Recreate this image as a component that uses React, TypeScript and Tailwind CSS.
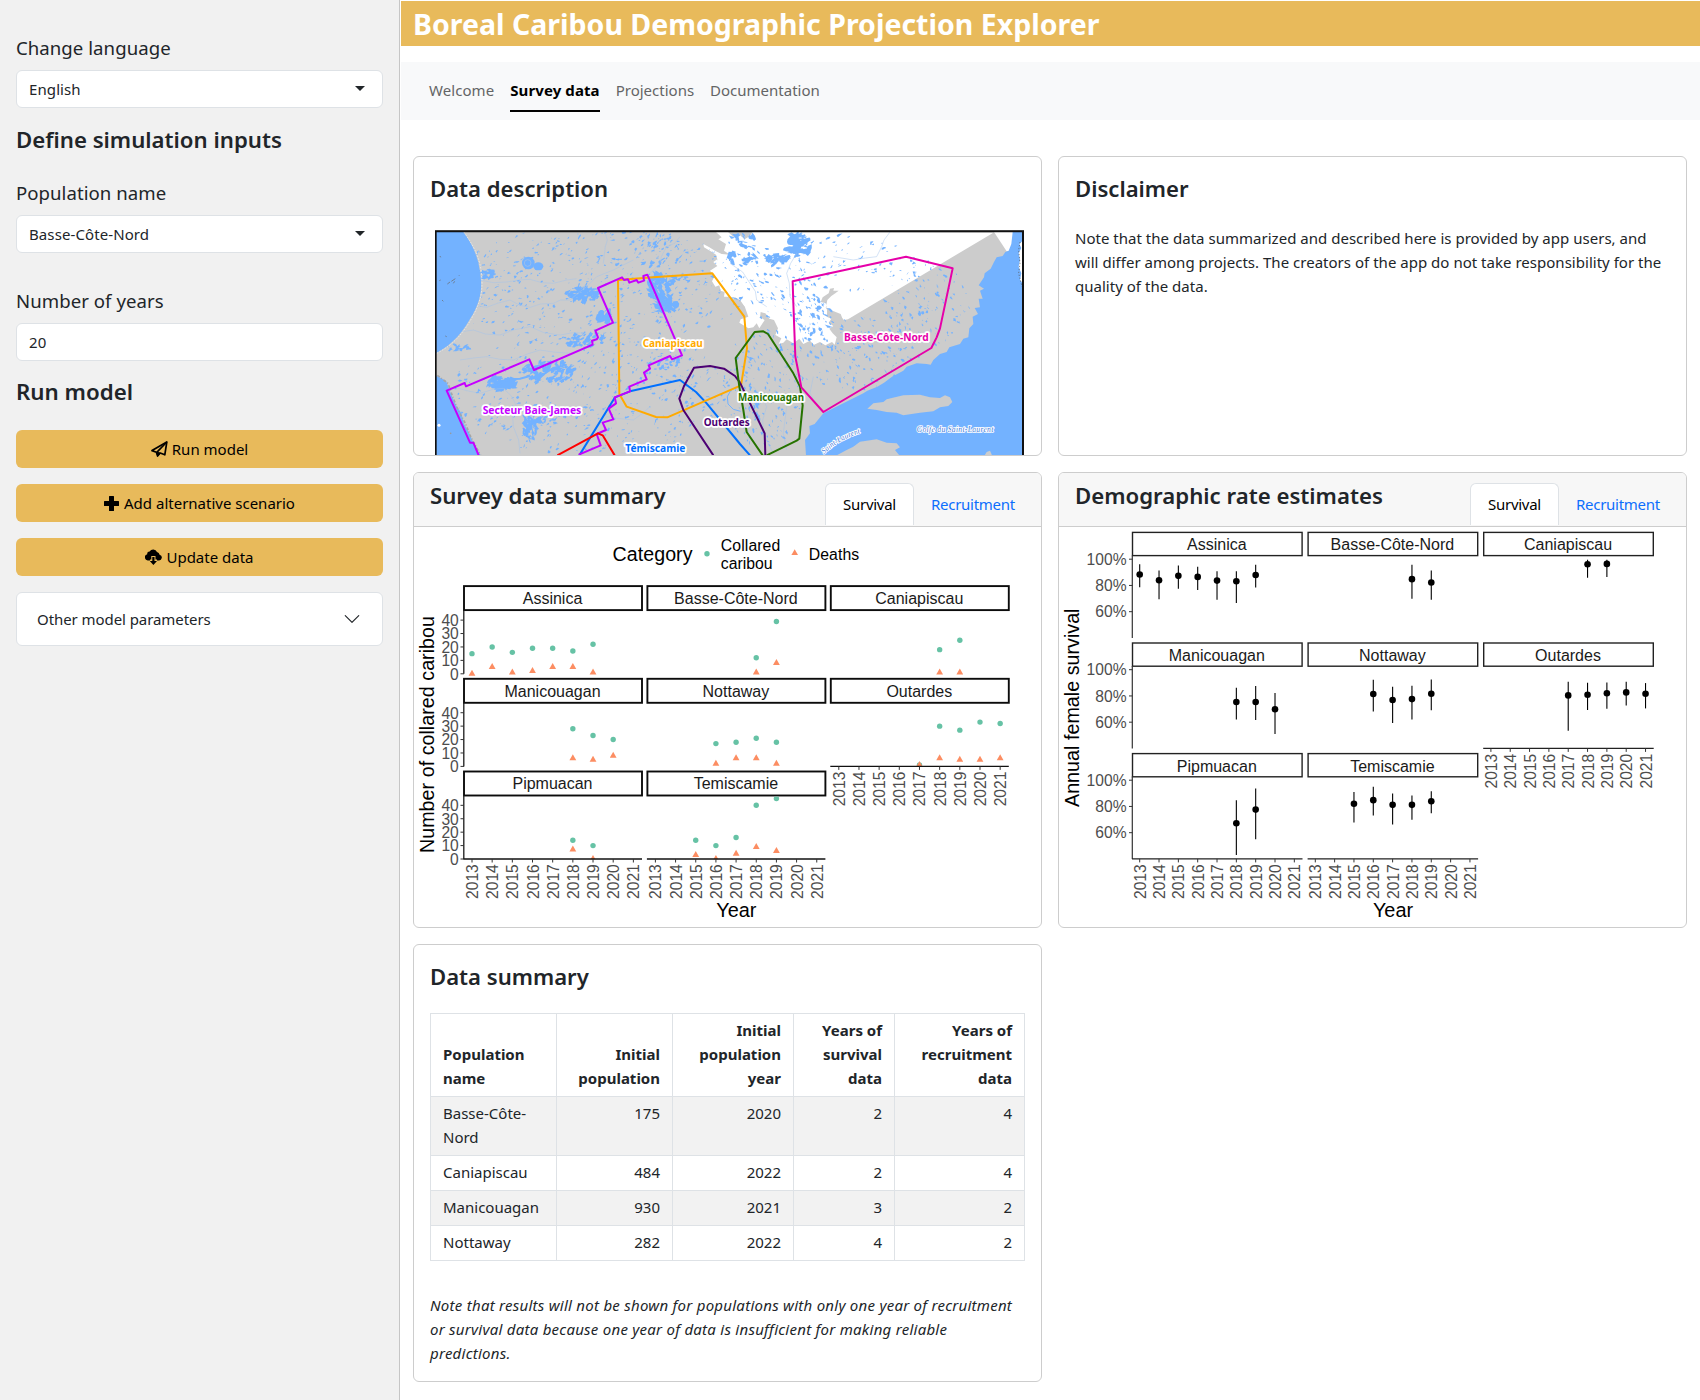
import React from "react";
import { BsChevronDown } from "react-icons/bs";

/* ---------- Icons ---------- */

const SendIcon = () => (
  <svg width="17" height="16" viewBox="0 0 17 16" fill="none" stroke="black" strokeWidth="1.7" strokeLinejoin="round">
    <path d="M1 9.6 15.8 1 13.8 13.8 9.2 12 6.6 15 5.4 11.2Z" />
    <path d="M15.8 1 6 11.2" />
    <path d="M5.6 11.2 9.2 12 6.6 15Z" fill="black" strokeWidth="1" />
  </svg>
);

const PlusIcon = () => (
  <svg width="15" height="15" viewBox="0 0 15 15">
    <path d="M5 .6Q5 0 5.6 0H9.4Q10 0 10 .6V5H14.4Q15 5 15 5.6V9.4Q15 10 14.4 10H10V14.4Q10 15 9.4 15H5.6Q5 15 5 14.4V10H.6Q0 10 0 9.4V5.6Q0 5 .6 5H5Z" />
  </svg>
);

const CloudIcon = () => (
  <svg width="17" height="16" viewBox="0 0 17 16">
    <path d="M5 11.4H3.2A3.1 3.1 0 0 1 2.2 5.3 2.4 2.4 0 0 1 4.6 2.6 4.1 4.1 0 0 1 12 2.9 3.6 3.6 0 0 1 14.6 5.7 2.9 2.9 0 0 1 13.6 11.4H12V10.6H10.5V7H6.3V10.6H5Z" />
    <path d="M7.3 8H9.5V12H12L8.4 16 4.8 12H7.3Z" />
  </svg>
);

/* ---------- Sidebar ---------- */

const Label = ({ children, className = "" }: { children: React.ReactNode; className?: string }) => (
  <div className={"mb-2 h-7 text-[18.6px] leading-7 tracking-[0.05px] " + className}>{children}</div>
);

const Field = ({ value, caret = false }: { value: string; caret?: boolean }) => (
  <div className="flex h-[38px] items-center justify-between rounded-md border border-[#dee2e6] bg-white pl-3 pr-[17px] text-[15px] leading-6 tracking-[0.1px]">
    <span>{value}</span>
    {caret && (
      <svg width="10" height="5" viewBox="0 0 10 5" className="-mt-0.5">
        <path d="M0 0H10L5 5Z" fill="#212529" />
      </svg>
    )}
  </div>
);

const Button = ({ icon, label, gap }: { icon: React.ReactNode; label: string; gap: string }) => (
  <button className={"flex h-[38px] w-full items-center justify-center rounded-md bg-[#e8ba5b] text-[15px] leading-6 text-black " + gap}>
    {icon}
    <span>{label}</span>
  </button>
);

const Sidebar = () => (
  <aside className="h-[1400px] w-[400px] shrink-0 border-r border-[#c6c6c6] bg-[#f1f1f1] pl-4 pr-4 pt-[34px]">
    <Label>Change language</Label>
    <Field value="English" caret />
    <h3 className="mt-[18px] h-7 text-[22.2px] font-semibold leading-7">Define simulation inputs</h3>
    <Label className="mt-[25px]">Population name</Label>
    <Field value="Basse-Côte-Nord" caret />
    <Label className="mt-[34px]">Number of years</Label>
    <Field value="20" />
    <h3 className="mt-[17px] h-7 text-[22.3px] font-semibold leading-7">Run model</h3>
    <div className="mt-6 flex flex-col gap-4">
      <Button icon={<SendIcon />} label="Run model" gap="gap-1" />
      <Button icon={<PlusIcon />} label="Add alternative scenario" gap="gap-[5px]" />
      <Button icon={<CloudIcon />} label="Update data" gap="gap-1" />
      <div className="flex h-[54px] items-center justify-between rounded-md border border-[#dee2e6] bg-white pl-5 pr-[21px] text-[15px] tracking-[-0.07px]">
        <span>Other model parameters</span>
        <BsChevronDown size={18} />
      </div>
    </div>
  </aside>
);

/* ---------- Map ---------- */

type Cluster = { x: number; y: number; rx: number; ry: number; n: number; s: number; a: number };

const clusters: Cluster[] = [
  { x: 520, y: 200, rx: 470, ry: 180, n: 520, s: 3.4, a: -0.5 },
  { x: 520, y: 520, rx: 430, ry: 190, n: 420, s: 3.4, a: -0.6 },
  { x: 330, y: 130, rx: 50, ry: 20, n: 8, s: 4, a: 0 },
  { x: 205, y: 165, rx: 20, ry: 14, n: 20, s: 7, a: 0.2 },
  { x: 110, y: 384, rx: 36, ry: 8, n: 12, s: 6, a: 0 },
  { x: 490, y: 222, rx: 52, ry: 22, n: 70, s: 6.5, a: -0.7 },
  { x: 715, y: 200, rx: 34, ry: 40, n: 70, s: 7, a: 0.9 },
  { x: 735, y: 255, rx: 34, ry: 26, n: 50, s: 8, a: 0.3 },
  { x: 750, y: 180, rx: 60, ry: 16, n: 40, s: 6, a: 0 },
  { x: 555, y: 292, rx: 20, ry: 18, n: 26, s: 8, a: -1 },
  { x: 500, y: 360, rx: 60, ry: 22, n: 50, s: 6, a: -0.5 },
  { x: 385, y: 455, rx: 80, ry: 34, n: 90, s: 7, a: -0.5 },
  { x: 245, y: 490, rx: 40, ry: 20, n: 70, s: 8, a: -0.3 },
  { x: 330, y: 620, rx: 20, ry: 42, n: 50, s: 6.5, a: 1.2 },
  { x: 380, y: 605, rx: 36, ry: 16, n: 24, s: 5, a: -0.2 },
  { x: 730, y: 430, rx: 50, ry: 20, n: 30, s: 5, a: -0.5 },
  { x: 710, y: 90, rx: 90, ry: 50, n: 60, s: 4.5, a: -0.6 },
  { x: 960, y: 85, rx: 50, ry: 50, n: 34, s: 7, a: 0.8 },
  { x: 1135, y: 75, rx: 34, ry: 32, n: 55, s: 9, a: -0.4 },
  { x: 1070, y: 118, rx: 34, ry: 14, n: 36, s: 8, a: -0.4 },
  { x: 1060, y: 190, rx: 130, ry: 110, n: 100, s: 4.2, a: 0.6 },
  { x: 1180, y: 290, rx: 55, ry: 60, n: 60, s: 5, a: 1 },
  { x: 1300, y: 130, rx: 200, ry: 90, n: 70, s: 3.5, a: -0.5 },
  { x: 1300, y: 400, rx: 200, ry: 110, n: 170, s: 3.5, a: 0.9 },
  { x: 1520, y: 250, rx: 130, ry: 130, n: 130, s: 3.5, a: 0.9 },
  { x: 1030, y: 500, rx: 120, ry: 180, n: 180, s: 3.6, a: 1.1 },
  { x: 1010, y: 560, rx: 12, ry: 50, n: 20, s: 5, a: 1.3 },
];

/** Small irregular lakes scattered inside the clusters, as one path. */
function lakesPath(): string {
  let seed = 1234567;
  const rnd = () => {
    seed = (seed * 1664525 + 1013904223) % 4294967296;
    return seed / 4294967296;
  };
  let d = "";
  for (const c of clusters) {
    for (let i = 0; i < c.n; i++) {
      const t = rnd() * Math.PI * 2;
      const q = Math.sqrt(rnd());
      const cx = c.x + Math.cos(t) * c.rx * q;
      const cy = c.y + Math.sin(t) * c.ry * q;
      const len = c.s * (0.5 + rnd() * 1.4);
      const wid = len * (0.25 + rnd() * 0.5);
      const a = c.a + (rnd() - 0.5) * 1.3;
      for (let k = 0; k < 8; k++) {
        const p = (k / 8) * Math.PI * 2;
        const r = 0.4 + rnd();
        const u = Math.cos(p) * len * r;
        const v = Math.sin(p) * wid * r;
        const x = cx + u * Math.cos(a) - v * Math.sin(a);
        const y = cy + u * Math.sin(a) + v * Math.cos(a);
        d += (k ? "L" : "M") + x.toFixed(1) + " " + y.toFixed(1);
      }
      d += "Z";
    }
  }
  return d;
}

const lakes = lakesPath();

const MapName = ({ x, y, w, color, children }: { x: number; y: number; w: number; color: string; children: string }) => (
  <text
    x={x}
    y={y}
    textLength={w}
    lengthAdjust="spacingAndGlyphs"
    fill={color}
    stroke="white"
    strokeWidth="11"
    strokeLinejoin="round"
    paintOrder="stroke"
    className="font-['Noto_Sans'] text-[31.5px] font-bold"
  >
    {children}
  </text>
);

const RangeMap = () => (
  <svg width="589" height="226" viewBox="45 30 1767 678" className="block shrink-0">
    <rect x="45" y="30" width="1767" height="810" fill="#cccccc" />
    {/* White area outside the province */}
    <path
      fill="white"
      d="M888 36 905 52 895 58 918 72 912 92 930 104 905 102 885 92 868 82 850 72 852 82 872 94 888 104 892 118 880 126 892 138 870 152 884 168 876 184 886 200 898 196 902 212 914 216 912 230 926 230 934 242 944 232 960 240 975 262 985 290 962 298 958 308 985 325 1000 322 1010 310 1018 325 1034 300 1020 292 1022 276 1036 280 1048 296 1062 300 1074 325 1066 345 1084 355 1076 372 1090 368 1100 358 1120 370 1138 356 1150 372 1170 362 1182 374 1200 366 1216 376 1236 366 1244 374 1250 352 1238 340 1228 326 1240 318 1226 308 1234 296 1220 290 1222 270 1216 262 1262 290 1272 300 1284 298 1720 38Z"
    />
    <path fill="#cccccc" d="M1222 276 1218 250 1202 246 1208 232 1226 220 1230 206 1242 204 1240 212 1256 212 1246 220 1234 228 1222 240 1218 262 1232 270 1262 282 1270 302 1240 300Z" />
    <path fill="#cccccc" d="M930 238 960 244 975 262 975 290 960 296 940 275Z" />
    <path fill="#cccccc" d="M924 36H998L990 48 974 58 960 46 940 50Z" />
    <path fill="white" d="M1722 36H1780L1778 70 1772 92 1760 94Z" />
    {/* Lakes and rivers */}
    <path d={lakes} fill="#73b2ff" />
    <g fill="none" stroke="#a3c3ec" strokeWidth="1.4">
      <path d="M120 240 150 246 162 256 200 262 232 250 270 240 300 256 330 262 362 252 400 250 422 240 450 240 478 216 500 200 530 170 580 150 640 120" />
      <path d="M90 340 120 336 160 330 196 342 240 345 280 330 330 320 372 338 420 345 460 338 500 340" />
      <path d="M180 180 220 188 260 186 296 180 330 178 366 188 400 190 440 180 470 176" />
      <path d="M555 36 562 60 556 80 550 130" />
      <path d="M780 50 764 70 740 80 724 110 720 130 690 160" />
      <path d="M120 420 160 414 200 410 240 418 280 420 322 402 360 390 400 396 450 400" />
      <path d="M100 500 140 512 180 520 220 508 250 505 276 530 290 560 278 590 280 620 296 660 300 700" />
      <path d="M520 640 540 612 560 590 600 596 640 600 668 580 690 560" />
      <path d="M930 130 968 156 990 190 1006 214 1010 240 1040 260" />
      <path d="M1130 100 1112 130 1100 160 1108 190 1110 230 1130 260" />
      <path d="M1410 36 1392 60 1385 80 1370 110 1336 114 1300 120 1240 110" />
      <path d="M1000 500 1024 530 1040 560 1028 600 1030 640 1060 700M1100 560 1090 640 1100 690M1180 470 1170 520 1200 570" />
    </g>
    <g fill="none" stroke="#73b2ff" strokeWidth="3">
      <path d="M960 500 934 508 922 530 924 552 940 568 962 574" />
      <path d="M225 500 250 484 270 478 300 476 330 468M350 482 372 462 400 444 440 435" strokeWidth="6" />
      <path d="M690 180 704 200 715 225 736 244 760 270" strokeWidth="7" />
    </g>
    <circle cx="325" cy="129" r="19" fill="#73b2ff" />
    <circle cx="323" cy="129" r="10" fill="none" stroke="#a9c3e6" strokeWidth="2" />
    <ellipse cx="355" cy="139" rx="15" ry="12" fill="#73b2ff" />
    {/* Sea */}
    <path fill="#73b2ff" d="M46 36H130C152 66 172 100 179 150 188 200 184 235 160 280 130 335 100 372 48 400Z" />
    <path fill="none" stroke="#e4e4e4" strokeWidth="3" strokeDasharray="5 4" d="M132 36C152 66 176 100 183 150 190 200 186 235 162 282 134 335 102 374 50 400" />
    <path fill="#73b2ff" d="M46 466 78 482 92 520 108 556 124 580 132 612 148 640 160 668 172 690 186 712 190 840H46Z" />
    <path fill="none" stroke="#a6a6a6" strokeWidth="5" strokeDasharray="9 5 3 6" d="M52 466 84 490 98 530 114 570 136 610 152 650 170 684 182 706" />
    <g fill="none" stroke="#6d7f96" strokeWidth="3">
      <path d="M82 192 90 186M94 184 106 176M100 190 104 184M58 182 62 180M116 168 118 166M66 240 70 244M76 348 80 350M60 108 62 112" />
    </g>
    <circle cx="57" cy="616" r="4.5" fill="white" />
    <circle cx="92" cy="640" r="2.5" fill="#999" />
    <path
      fill="#73b2ff"
      d="M1778 36H1808V840H1150L1158 706 1155 660 1170 640 1168 618 1184 612 1210 580 1258 556 1330 520 1342 512 1372 500 1392 488 1416 470 1450 452 1460 440 1490 430 1520 432 1532 434 1540 420 1560 402 1580 396 1588 382 1620 372 1630 356 1645 352 1648 325 1660 312 1658 290 1674 282 1664 264 1680 262 1676 236 1688 236 1680 212 1692 206 1676 196 1692 172 1694 160 1712 146 1722 126 1730 112 1748 108 1756 96 1766 92 1774 72Z"
    />
    <path fill="white" d="M1808 62 1798 72 1804 84 1796 100 1800 120 1796 140 1804 160 1800 180 1808 190Z" />
    <path fill="none" stroke="#555" strokeWidth="2" strokeDasharray="4 5" d="M1800 66 1796 90 1800 130 1796 160 1806 200" />
    <path fill="#cccccc" d="M1342 566 1360 550 1390 546 1400 538 1450 526 1500 524 1530 532 1560 534 1575 526 1590 532 1597 546 1585 558 1560 562 1540 574 1500 578 1450 586 1430 578 1400 576 1370 570Z" />
    <path fill="#cccccc" d="M1250 706 1280 690 1300 680 1320 665 1370 658 1400 668 1430 670 1440 682 1425 690 1438 706V840H1250Z" />
    <path fill="#cccccc" d="M1694 706 1700 696 1710 692 1716 706Z" />
    {/* Range boundaries */}
    <g fill="none" strokeWidth="6" strokeLinejoin="round">
      <path stroke="#0070ff" d="M478 706 585 532 630 514 780 480 828 516 860 550 960 672 990 706" />
      <path stroke="#ffaa00" d="M594 180 700 172 877 160 973 290 981 385 963 496 742 592 708 591 620 560 598 522Z" />
      <path stroke="#c500ff" d="M176 706 160 668 150 668 80 512 134 489 138 499 328 418 342 450 518 374 516 362 530 358 534 352 526 332 579 308 534 204 606 172 612 180 624 178 628 188 650 180 655 188 672 182 670 168 682 164 786 406 756 418 750 408 686 436 690 446 672 458 680 478 628 500 630 514 584 532 588 550 566 566 580 598 548 608 558 630 530 642 542 676 476 704" />
      <path stroke="#4c0073" d="M960 488 945 468 912 446 870 438 822 443 792 498 778 536 790 570 880 706M960 488 1034 640 1036 706" />
      <path stroke="#267300" d="M1028 706 980 636 970 570 958 500 947 414 1004 336 1030 334 1044 342 1120 460 1140 500 1148 556 1138 656 1130 662 1040 706" />
      <path stroke="#e600a9" d="M1118 184 1458 110 1598 145 1560 325 1550 352 1534 384 1210 576 1144 502 1134 450 1126 410 1120 250Z" />
      <path stroke="red" d="M412 706 534 640 548 646 584 706" />
    </g>
    <MapName x={668} y={380} w={180} color="#ffaa00">Caniapiscau</MapName>
    <MapName x={188} y={581} w={296} color="#c500ff">Secteur Baie-James</MapName>
    <MapName x={616} y={695} w={180} color="#0070ff">Témiscamie</MapName>
    <MapName x={851} y={619} w={138} color="#4c0073">Outardes</MapName>
    <MapName x={954} y={543} w={198} color="#267300">Manicouagan</MapName>
    <MapName x={1272} y={364} w={254} color="#e600a9">Basse-Côte-Nord</MapName>
    <g className="font-['Liberation_Serif'] text-[23px] italic" fill="#3f78d8" stroke="white" strokeWidth="5" paintOrder="stroke">
      <text x="1490" y="636" textLength="230">Golfe du Saint-Laurent</text>
      <path id="river" d="M1212 702Q1262 652 1352 630" fill="none" stroke="none" />
      <text>
        <textPath href="#river">Saint-Laurent</textPath>
      </text>
    </g>
    <path d="M47 840V34H1809V840" fill="none" stroke="#111" strokeWidth="6" />
  </svg>
);

/* ---------- Charts ---------- */

const YEARS = [2013, 2014, 2015, 2016, 2017, 2018, 2019, 2020, 2021];

type CountPoint = [year: number, collared: number, deaths: number];

const counts: { name: string; pts: CountPoint[] }[] = [
  { name: "Assinica", pts: [[2013, 15, 0], [2014, 20, 5], [2015, 16, 1], [2016, 19, 2], [2017, 19, 5], [2018, 17, 5], [2019, 22, 1]] },
  { name: "Basse-Côte-Nord", pts: [[2018, 12, 1], [2019, 39, 8]] },
  { name: "Caniapiscau", pts: [[2018, 18, 1], [2019, 25, 1]] },
  { name: "Manicouagan", pts: [[2018, 28, 6], [2019, 23, 5], [2020, 20, 8]] },
  { name: "Nottaway", pts: [[2016, 17, 2], [2017, 18, 6], [2018, 21, 6], [2019, 18, 2]] },
  { name: "Outardes", pts: [[2017, 1, 1], [2018, 30, 6], [2019, 27, 5], [2020, 33, 5], [2021, 32, 6]] },
  { name: "Pipmuacan", pts: [[2018, 14, 7], [2019, 10, 0]] },
  { name: "Temiscamie", pts: [[2015, 14, 3], [2016, 10, 0], [2017, 16, 4], [2018, 40, 9], [2019, 45, 6]] },
];

const YearTicks = ({ x0, step, y, labelY }: { x0: number; step: number; y: number; labelY: number }) => (
  <>
    {YEARS.map((year, i) => (
      <g key={year}>
        <path d={`M${x0 + i * step} ${y}v3.5`} stroke="#333" strokeWidth="1" />
        <text transform={`translate(${x0 + i * step + 6} ${labelY}) rotate(-90)`} textAnchor="end" fill="#4d4d4d" className="text-[15.6px]">
          {year}
        </text>
      </g>
    ))}
  </>
);

const SurvivalCounts = () => (
  <svg width="627" height="400" viewBox="414 527.5 627 400" className="block font-['Liberation_Sans']">
    <defs>
      <clipPath id="plot-rows">
        <path d="M414 611H1041V677H414ZM414 704H1041V767H414ZM414 797H1041V860H414Z" />
      </clipPath>
    </defs>
    <text x="612.5" y="561.5" textLength="80" className="text-[19.6px]">Category</text>
    <circle cx="707" cy="554.3" r="2.7" fill="#66c2a5" />
    <text x="720.8" y="551.6" textLength="59.5" className="text-[15.8px]">Collared</text>
    <text x="720.8" y="569" className="text-[15.8px]">caribou</text>
    <path d="M794.7 549.8l3.3 5.8h-6.6z" fill="#fc8d62" />
    <text x="808.7" y="560.5" textLength="50.5" className="text-[15.8px]">Deaths</text>
    <text transform="translate(434 853.5) rotate(-90)" textLength="237" className="text-[19.7px]">Number of collared caribou</text>
    <text x="736.4" y="917.5" textAnchor="middle" className="text-[19.9px]">Year</text>
    {counts.map(({ name, pts }, i) => {
      const col = i % 3;
      const row = Math.floor(i / 3);
      const x = 464 + col * 183.4;
      const x0 = 472 + col * 183.4;
      const top = 586.6 + row * 92.7;
      const zero = 674.3 + row * 92.6;
      const sy = (v: number) => zero - v * 1.342;
      return (
        <g key={name}>
          <rect x={x} y={top} width="178" height="24" fill="white" stroke="#0c0c0c" strokeWidth="1.9" />
          <text x={x + 88.5} y={top + 17.9} textAnchor="middle" fill="#1a1a1a" className="text-[16px]">{name}</text>
          {col === 0 && (
            <>
              <path d={`M${x - 0.2} ${top + 24}V${zero}`} stroke="#1a1a1a" strokeWidth="1.3" />
              {[0, 10, 20, 30, 40].map((v) => (
                <g key={v}>
                  <path d={`M${x - 3.5} ${sy(v)}h3.5`} stroke="#333" strokeWidth="1" />
                  <text x="458.8" y={sy(v) + 5.9} textAnchor="end" fill="#4d4d4d" className="text-[15.6px]">{v}</text>
                </g>
              ))}
            </>
          )}
          <g clipPath="url(#plot-rows)">
            {pts.map(([year, a, b]) => {
              const px = x0 + (year - 2013) * 20.17;
              return (
                <g key={year}>
                  <circle cx={px} cy={sy(a)} r="2.7" fill="#66c2a5" />
                  <path d={`M${px} ${sy(b) - 4}l3.4 6h-6.8z`} fill="#fc8d62" />
                </g>
              );
            })}
          </g>
          {i >= 5 && (
            <>
              <path d={`M${x - 0.5} ${zero}h178.5`} stroke="#111" strokeWidth="1.3" />
              <YearTicks x0={x0} step={20.17} y={zero} labelY={zero + 5.2} />
            </>
          )}
        </g>
      );
    })}
  </svg>
);

type RatePoint = [year: number, mean: number, high: number, low: number];

const rates: { name: string; pts: RatePoint[] }[] = [
  { name: "Assinica", pts: [[2013, 88.3, 96.2, 78.7], [2014, 84, 91.4, 69.5], [2015, 87.3, 95.2, 77.4], [2016, 86.5, 94.2, 76.6], [2017, 83.7, 90.9, 69], [2018, 83.2, 90.9, 66.7], [2019, 88, 95.7, 78.4]] },
  { name: "Basse-Côte-Nord", pts: [[2018, 84.8, 95.7, 69.8], [2019, 82.2, 91.4, 69]] },
  { name: "Caniapiscau", pts: [[2018, 96.2, 99.5, 85.8], [2019, 96.4, 99.5, 86.5]] },
  { name: "Manicouagan", pts: [[2018, 75.4, 86.3, 62.1], [2019, 75.4, 87.6, 61.6], [2020, 69.8, 82.2, 51]] },
  { name: "Nottaway", pts: [[2016, 81.5, 92.4, 68.2], [2017, 76.9, 87, 59.3], [2018, 77.6, 87.8, 62.1], [2019, 81.7, 92.6, 69]] },
  { name: "Outardes", pts: [[2017, 80.4, 90.9, 53.5], [2018, 80.9, 90, 69.3], [2019, 82, 90.3, 70.3], [2020, 82.7, 90.9, 72.8], [2021, 81.7, 89.8, 70.5]] },
  { name: "Pipmuacan", pts: [[2018, 67.2, 84.8, 43], [2019, 77.6, 93.6, 55]] },
  { name: "Temiscamie", pts: [[2015, 82, 91, 67.7], [2016, 84.8, 95, 73], [2017, 81.2, 89.8, 66.2], [2018, 81.2, 88.3, 69.8], [2019, 84, 91.6, 74.8]] },
];

const SurvivalRates = () => (
  <svg width="627" height="400" viewBox="1059 527.5 627 400" className="block font-['Liberation_Sans']">
    <text transform="translate(1079 807.5) rotate(-90)" textLength="198.5" className="text-[19.7px]">Annual female survival</text>
    <text x="1393" y="917.5" textAnchor="middle" className="text-[19.9px]">Year</text>
    {rates.map(({ name, pts }, i) => {
      const col = i % 3;
      const row = Math.floor(i / 3);
      const x = 1132.5 + col * 175.6;
      const x0 = 1139.7 + col * 175.6;
      const top = 532.9 + row * 110.6;
      const full = 559.7 + row * 110.5;
      const sy = (v: number) => full + (100 - v) * 1.312;
      const base = full + 78.7;
      return (
        <g key={name}>
          <rect x={x} y={top} width="169.6" height="23.2" fill="white" stroke="#222" strokeWidth="1.4" />
          <text x={x + 84.3} y={top + 18} textAnchor="middle" fill="#1a1a1a" className="text-[16px]">{name}</text>
          {col === 0 && (
            <>
              <path d={`M${x - 0.2} ${top + 23}V${base}`} stroke="#333" strokeWidth="1.2" />
              {[60, 80, 100].map((v) => (
                <g key={v}>
                  <path d={`M${x - 3.5} ${sy(v)}h3.5`} stroke="#333" strokeWidth="1" />
                  <text x="1126.5" y={sy(v) + 5.6} textAnchor="end" fill="#4d4d4d" className="text-[15.6px]">{`${v}%`}</text>
                </g>
              ))}
            </>
          )}
          {pts.map(([year, mean, high, low]) => {
            const px = x0 + (year - 2013) * 19.33;
            return (
              <g key={year}>
                <path d={`M${px} ${sy(high)}V${sy(low)}`} stroke="black" strokeWidth="1.1" />
                <circle cx={px} cy={sy(mean)} r="3.3" />
              </g>
            );
          })}
          {i >= 5 && (
            <>
              <path d={`M${x - 0.5} ${base}h170.5`} stroke="#222" strokeWidth="1.2" />
              <YearTicks x0={x0} step={19.33} y={base} labelY={base + 5.4} />
            </>
          )}
        </g>
      );
    })}
  </svg>
);

/* ---------- Main area ---------- */

const Card = ({ children, className }: { children: React.ReactNode; className: string }) => (
  <section className={"overflow-hidden rounded-md border border-[#cdcdcd] bg-white " + className}>{children}</section>
);

const TabbedCard = ({ title, children }: { title: string; children: React.ReactNode }) => (
  <Card className="h-[456px]">
    <div className="flex h-[54px] justify-between border-b border-[#cdcdcd] bg-[#f7f7f7] pl-4 pr-2">
      <h3 className="mt-[9px] h-7 text-[22.2px] font-semibold leading-7">{title}</h3>
      <div className="mt-[10px] flex h-[42px] text-[15px] leading-[40px] tracking-[-0.27px]">
        <div className="w-[89px] rounded-t-md border border-b-0 border-[#dee2e6] bg-white text-center text-black">Survival</div>
        <div className="w-[119px] pl-[17px] pt-px text-[#0d6efd]">Recruitment</div>
      </div>
    </div>
    {children}
  </Card>
);

const rows = [
  ["Basse-Côte-Nord", "175", "2020", "2", "4"],
  ["Caniapiscau", "484", "2022", "2", "4"],
  ["Manicouagan", "930", "2021", "3", "2"],
  ["Nottaway", "282", "2022", "4", "2"],
];

const SummaryTable = () => (
  <table className="mt-[23px] w-[594px] table-fixed border-collapse text-[15px] leading-6">
    <colgroup>
      <col className="w-[126px]" />
      <col className="w-[116px]" />
      <col className="w-[121px]" />
      <col className="w-[101px]" />
      <col className="w-[130px]" />
    </colgroup>
    <thead>
      <tr>
        {["Population name", "Initial population", "Initial population year", "Years of survival data", "Years of recruitment data"].map((h, i) => (
          <th key={h} className={"border border-[#dee2e6] pb-[6px] pl-3 pr-3 pt-1 align-bottom font-bold " + (i ? "text-right" : "text-left")}>
            {h}
          </th>
        ))}
      </tr>
    </thead>
    <tbody>
      {rows.map((r, k) => (
        <tr key={r[0]} className={k % 2 ? "bg-white" : "bg-[#f2f2f2]"}>
          {r.map((v, i) => (
            <td key={i} className={"border border-[#dee2e6] pb-[6px] pl-3 pr-3 pt-1 align-top " + (i ? "text-right" : "text-left")}>
              {v}
            </td>
          ))}
        </tr>
      ))}
    </tbody>
  </table>
);

export default function App() {
  return (
    <div className="flex h-[1400px] w-[1700px] overflow-hidden bg-white font-['Noto_Sans',sans-serif] text-[#212529]">
      <Sidebar />
      <main className="ml-px flex-1">
        <header className="mt-px h-[45px] bg-[#e8ba5b] pl-3">
          <h1 className="whitespace-nowrap text-[28.5px] font-bold leading-[47px] text-white">Boreal Caribou Demographic Projection Explorer</h1>
        </header>
        <nav className="mt-4 flex h-[58px] gap-4 bg-[#f8f9fa] pl-7 pt-4 text-[15px] leading-6 text-[#646566]">
          <span className="tracking-[0.07px]">Welcome</span>
          <span className="h-[34px] border-b-2 border-black font-bold tracking-[0.1px] text-black">Survey data</span>
          <span>Projections</span>
          <span>Documentation</span>
        </nav>
        <div className="mt-9 grid grid-cols-2 gap-4 pl-3 pr-[13px]">
          <Card className="h-[300px] pl-[21px] pt-[17px]">
            <h3 className="-ml-[5px] h-7 text-[22.1px] font-semibold leading-7">Data description</h3>
            <div className="mt-7">
              <RangeMap />
            </div>
          </Card>
          <Card className="h-[300px] px-4 pt-[17px]">
            <h3 className="h-7 text-[22.1px] font-semibold leading-7">Disclaimer</h3>
            <p className="mt-6 whitespace-nowrap text-[15px] leading-6 tracking-[0.02px]">
              Note that the data summarized and described here is provided by app users, and
              <br />
              will differ among projects. The creators of the app do not take responsibility for the
              <br />
              quality of the data.
            </p>
          </Card>
          <TabbedCard title="Survey data summary">
            <SurvivalCounts />
          </TabbedCard>
          <TabbedCard title="Demographic rate estimates">
            <SurvivalRates />
          </TabbedCard>
          <Card className="h-[438px] px-4 pt-[17px]">
            <h3 className="h-7 text-[22.1px] font-semibold leading-7">Data summary</h3>
            <SummaryTable />
            <p className="mt-8 whitespace-nowrap text-[15px] italic leading-6 tracking-[0.26px]">
              Note that results will not be shown for populations with only one year of recruitment
              <br />
              or survival data because one year of data is insufficient for making reliable
              <br />
              predictions.
            </p>
          </Card>
        </div>
      </main>
    </div>
  );
}
